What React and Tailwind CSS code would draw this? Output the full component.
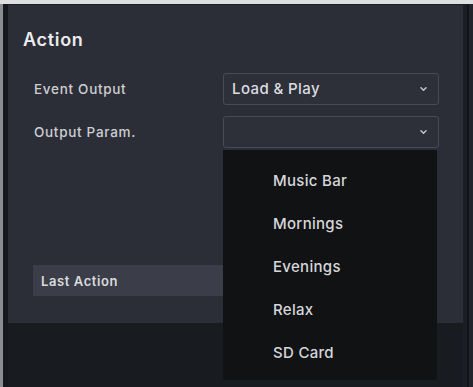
import React from "react";

function Chevron() {
  return (
    <svg width="9" height="6" viewBox="0 0 9 6" className="shrink-0">
      <path d="M2 1.8 L4.5 4.3 L7 1.8" fill="none" stroke="#c4c6cb" strokeWidth="1.5" strokeLinecap="round" strokeLinejoin="round" />
    </svg>
  );
}

export default function App() {
  const items = ["Music Bar", "Mornings", "Evenings", "Relax", "SD Card"];
  return (
    <div
      className="w-[473px] h-[387px] overflow-hidden flex flex-col bg-[#181b20]"
      style={{ fontFamily: "Inter, 'Open Sans', sans-serif" }}
    >
      <div className="h-[4px] bg-[#dedfe1] shrink-0" />
      <div className="flex flex-1 min-h-0">
        <div className="w-[3px] bg-[#8a8d92] shrink-0" />
        <div className="w-[5px] bg-[#16181c] shrink-0" />
        <div className="flex flex-col w-[455px] shrink-0">
          <div className="h-[1px] bg-[#1d2026]" />
          <div className="h-[318px] bg-[#2b2e37] flex flex-col">
            <div className="pl-[15px] pt-[24px] text-[18px] font-semibold text-[#ececee] leading-[22px] tracking-[0.7px]">
              Action
            </div>
            <div className="mt-[22px] flex items-center h-[32px] pl-[26px]">
              <div className="w-[189px] text-[13.5px] font-medium text-[#cdced2] tracking-[0.7px]">Event Output</div>
              <div className="w-[216px] h-[32px] rounded-[3px] border border-[#474b55] bg-[#2d3039] flex items-center justify-between pl-[8px] pr-[10px]">
                <span className="text-[15px] font-medium text-[#dcdde0] tracking-[0.4px]">Load &amp; Play</span>
                <Chevron />
              </div>
            </div>
            <div className="mt-[11px] flex items-center h-[32px] pl-[26px]">
              <div className="w-[189px] text-[13.5px] font-medium text-[#cdced2] tracking-[0.7px]">Output Param.</div>
              <div className="relative w-[216px] h-[32px]">
                <div className="w-full h-full rounded-[3px] border border-[#474b55] bg-[#2d3039] flex items-center justify-end pr-[10px]">
                  <Chevron />
                </div>
                <div className="absolute left-0 top-[34px] w-[214px] h-[230px] bg-[#111214] z-10 flex flex-col pl-[50px] pt-[20px]">
                  {items.map((t) => (
                    <div key={t} className="h-[43px] shrink-0 flex items-start text-[15px] font-medium text-[#d6d7da] tracking-[0.3px] leading-[22px]">
                      {t}
                    </div>
                  ))}
                </div>
              </div>
            </div>
            <div className="mt-[117px] ml-[25px] mr-[26px] h-[31px] bg-[#3b3e48] flex items-center pl-[8px] pt-[3px] text-[13px] font-semibold text-[#d9dadd] tracking-[0.6px]">
              Last Action
            </div>
          </div>
        </div>
        <div className="w-[4px] bg-[#1b1e24] shrink-0" />
        <div className="w-[2px] bg-[#121417] shrink-0" />
        <div className="flex-1 bg-[#22252c]" />
      </div>
    </div>
  );
}
